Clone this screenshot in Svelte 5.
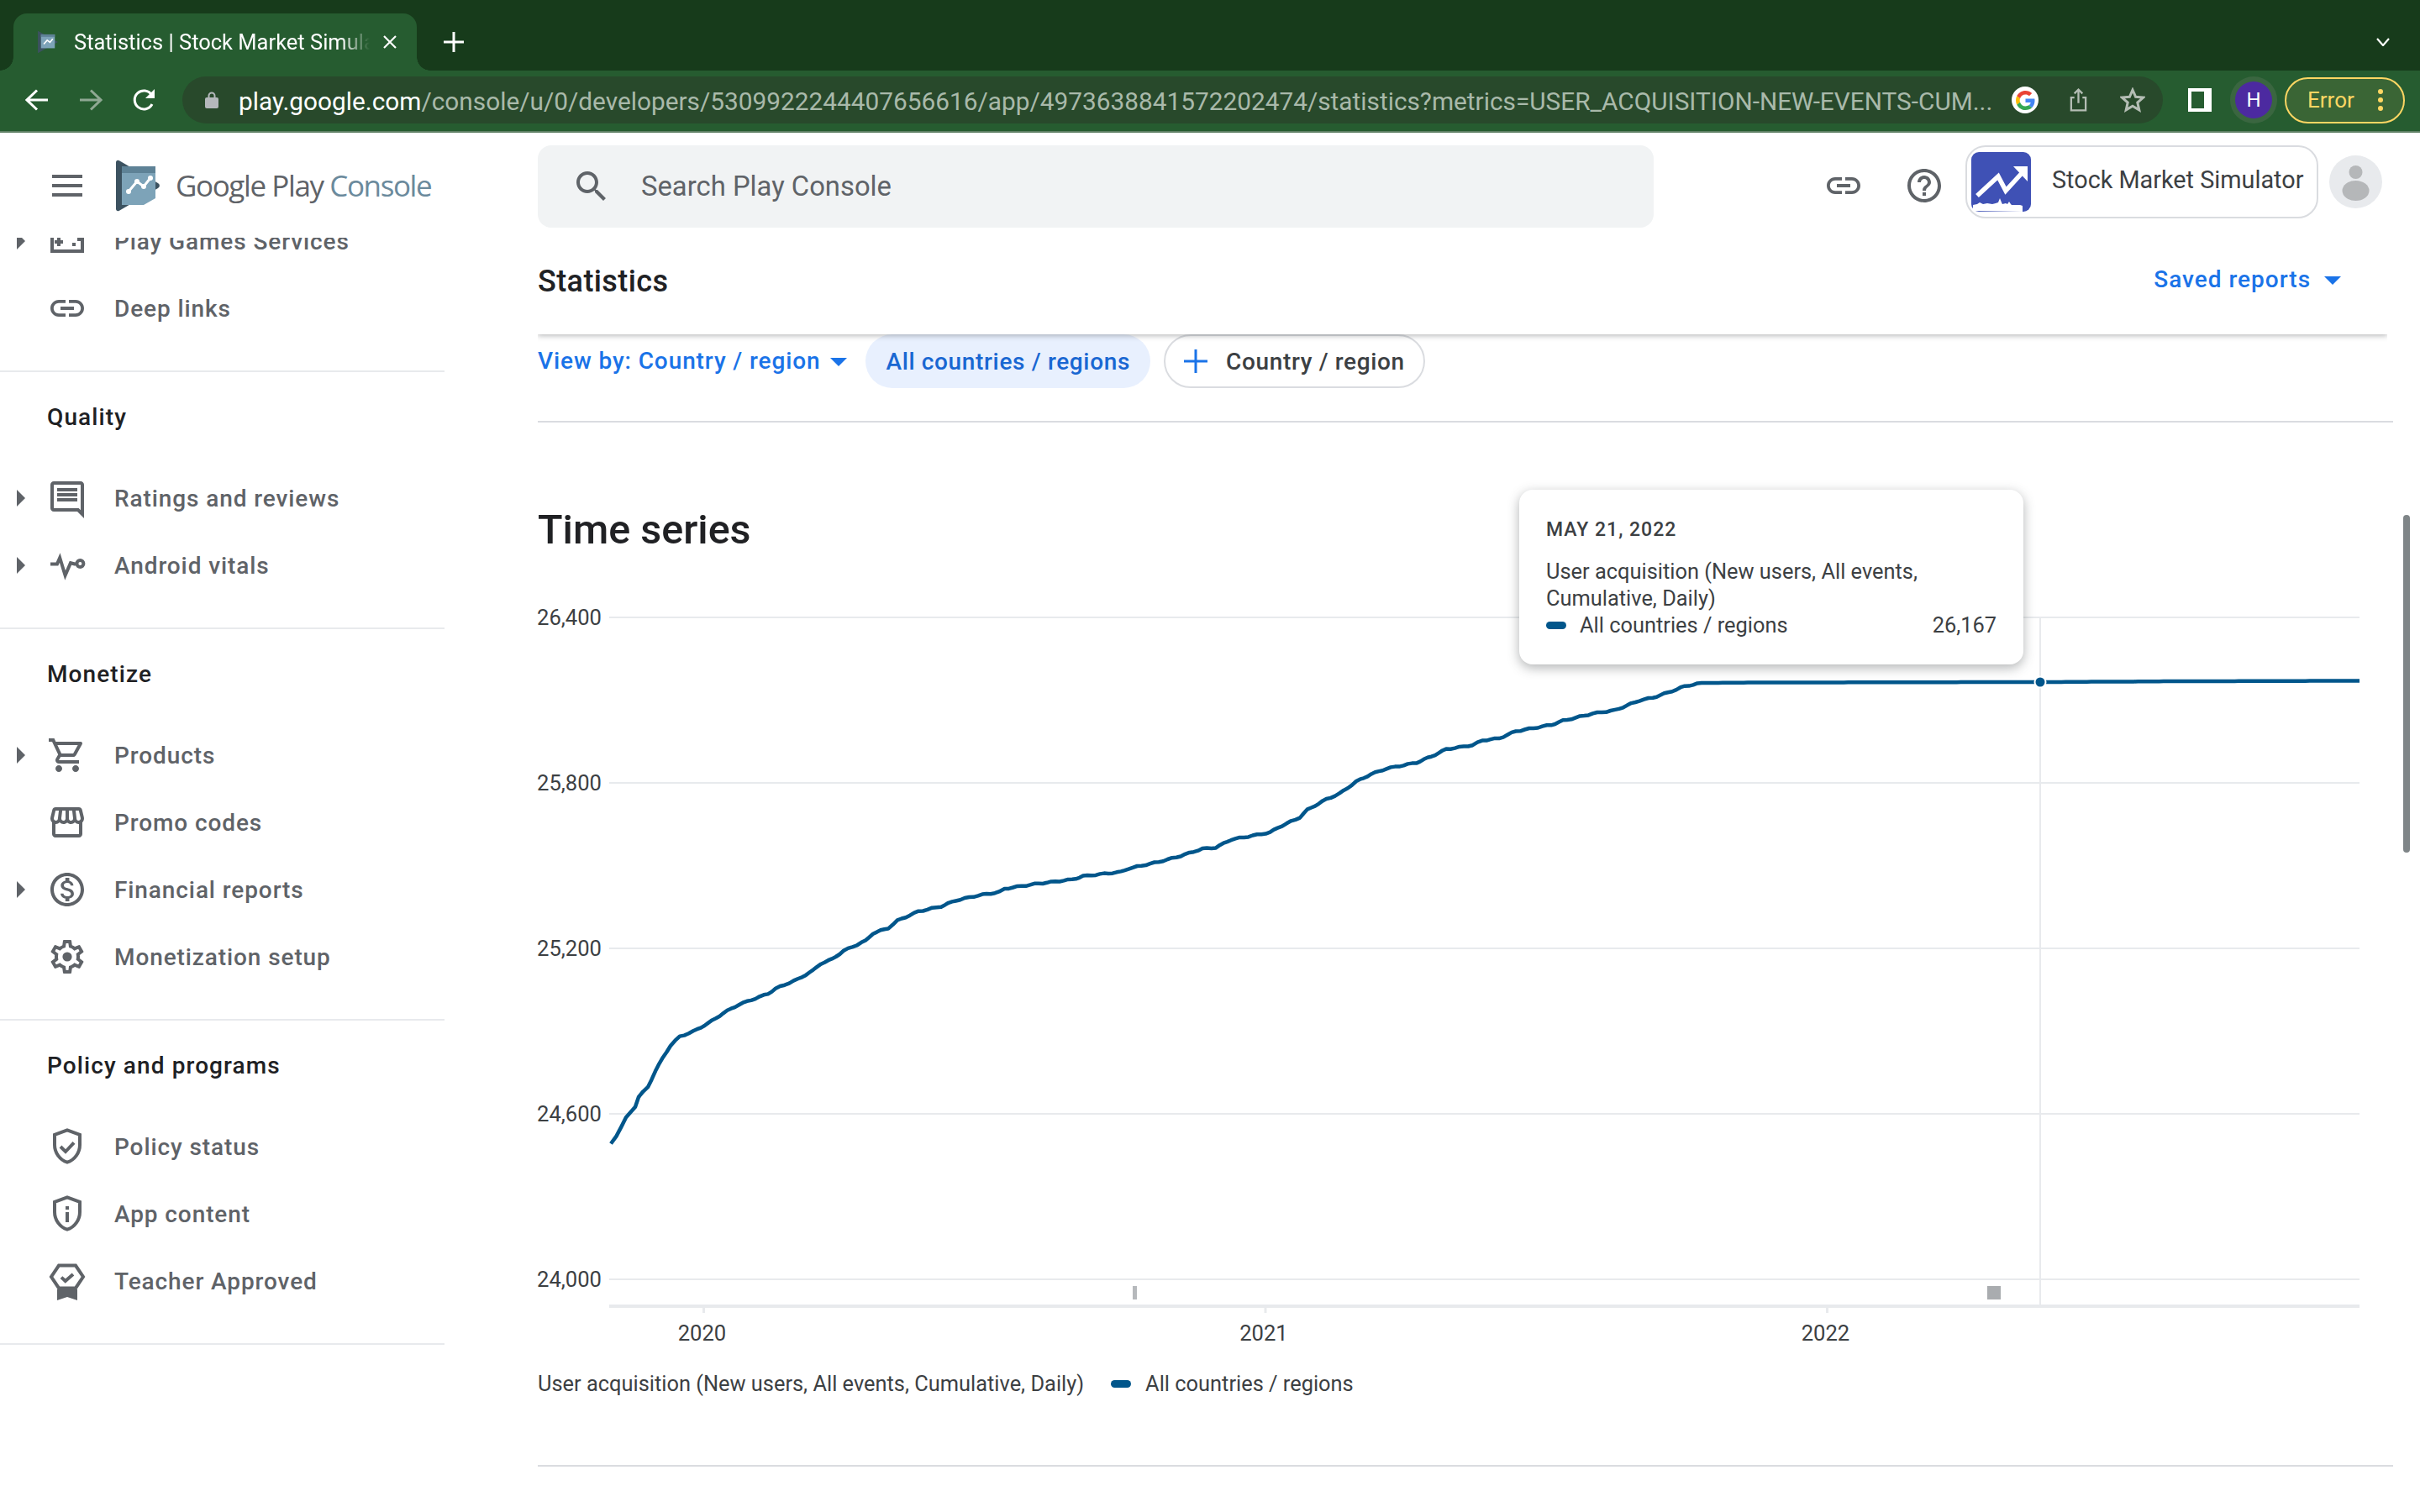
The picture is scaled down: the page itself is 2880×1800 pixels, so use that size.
<script>
  // sidebar icons, 24 unit grid drawn at 48px
  const icons = {
    games: { s: 'M3 7h18v11H3zM7 10v5M4.5 12.5h5', d: 'M15 13h2v2h-2zM18 10h2v2h-2z' },
    link: { d: 'M3.9 12c0-1.71 1.39-3.1 3.1-3.1h4V7H7c-2.76 0-5 2.24-5 5s2.24 5 5 5h4v-1.9H7c-1.71 0-3.1-1.39-3.1-3.1zM8 13h8v-2H8v2zm9-6h-4v1.9h4c1.71 0 3.1 1.39 3.1 3.1s-1.39 3.1-3.1 3.1h-4V17h4c2.76 0 5-2.24 5-5s-2.24-5-5-5z' },
    reviews: { d: 'M20 2H4c-1.1 0-2 .9-2 2v14c0 1.1.9 2 2 2h14l4 4V4c0-1.1-.9-2-2-2zm0 17.17L18.83 18H4V4h16v15.17zM6 12h12v2H6zm0-3h12v2H6zm0-3h12v2H6z' },
    vitals: { s: 'M2 11.2h4L7.6 7.5l3.2 10.5L14 10.6l3 .8M21.7 11a2 2 0 1 1-4 0 2 2 0 0 1 4 0z' },
    cart: { d: 'M15.55 13c.75 0 1.41-.41 1.75-1.03l3.58-6.49c.37-.66-.11-1.48-.87-1.48H5.21l-.94-2H1v2h2l3.6 7.59-1.35 2.44C4.52 15.37 5.48 17 7 17h12v-2H7l1.1-2h7.45zM6.16 6h12.15l-2.76 5H8.53L6.16 6zM7 18c-1.1 0-1.99.9-1.99 2S5.9 22 7 22s2-.9 2-2-.9-2-2-2zm10 0c-1.1 0-1.99.9-1.99 2s.89 2 1.99 2 2-.9 2-2-.9-2-2-2z' },
    store: { d: 'M21.9 8.89l-1.05-4.37c-.22-.9-1-1.52-1.91-1.52H5.05c-.9 0-1.69.63-1.9 1.52L2.1 8.89c-.24 1.02-.02 2.06.62 2.88.08.11.19.19.28.29V19c0 1.1.9 2 2 2h14c1.1 0 2-.9 2-2v-6.94c.09-.09.2-.18.28-.28.64-.82.87-1.87.62-2.89zm-2.99-3.9l1.05 4.37c.1.42.01.84-.25 1.17-.14.18-.44.47-.94.47-.61 0-1.14-.49-1.21-1.14L16.98 5l1.93-.01zM13 5h1.96l.54 4.52c.05.39-.07.78-.33 1.07-.22.26-.54.41-.95.41-.67 0-1.22-.59-1.22-1.31V5zM8.49 9.52L9.04 5H11v4.69c0 .72-.55 1.31-1.29 1.31-.34 0-.65-.15-.89-.41-.25-.29-.37-.68-.33-1.07zm-4.45-.16L5.05 5h1.97l-.58 4.86c-.08.65-.6 1.14-1.21 1.14-.49 0-.8-.29-.93-.47-.27-.32-.36-.75-.26-1.17zM5 19v-6.03c.08.01.15.03.23.03.87 0 1.66-.36 2.24-.95.6.6 1.4.95 2.31.95.87 0 1.65-.36 2.23-.93.59.57 1.39.93 2.29.93.84 0 1.64-.35 2.24-.95.58.59 1.37.95 2.24.95.08 0 .15-.02.23-.03V19H5z' },
    money: { d: 'M12 2C6.48 2 2 6.48 2 12s4.48 10 10 10 10-4.48 10-10S17.52 2 12 2zm0 18c-4.41 0-8-3.59-8-8s3.59-8 8-8 8 3.59 8 8-3.59 8-8 8zm.31-8.86c-1.77-.45-2.34-.94-2.34-1.67 0-.84.79-1.43 2.1-1.43 1.38 0 1.9.66 1.94 1.64h1.71c-.05-1.34-.87-2.57-2.49-2.97V5H10.9v1.69c-1.51.32-2.72 1.3-2.72 2.81 0 1.79 1.49 2.69 3.66 3.21 1.95.46 2.34 1.15 2.34 1.87 0 .53-.39 1.39-2.1 1.39-1.6 0-2.23-.72-2.32-1.64H8.04c.1 1.7 1.36 2.66 2.86 2.97V19h2.34v-1.67c1.52-.29 2.72-1.16 2.73-2.77-.01-2.2-1.9-2.96-3.66-3.42z' },
    gear: { d: 'M19.43 12.98c.04-.32.07-.64.07-.98 0-.34-.03-.66-.07-.98l2.11-1.65c.19-.15.24-.42.12-.64l-2-3.46c-.09-.16-.26-.25-.44-.25-.06 0-.12.01-.17.03l-2.49 1c-.52-.4-1.08-.73-1.69-.98l-.38-2.65C14.46 2.18 14.25 2 14 2h-4c-.25 0-.46.18-.49.42l-.38 2.65c-.61.25-1.17.59-1.69.98l-2.49-1c-.06-.02-.12-.03-.18-.03-.17 0-.34.09-.43.25l-2 3.46c-.13.22-.07.49.12.64l2.11 1.65c-.04.32-.07.65-.07.98 0 .33.03.66.07.98l-2.11 1.65c-.19.15-.24.42-.12.64l2 3.46c.09.16.26.25.44.25.06 0 .12-.01.17-.03l2.49-1c.52.4 1.08.73 1.69.98l.38 2.65c.03.24.24.42.49.42h4c.25 0 .46-.18.49-.42l.38-2.65c.61-.25 1.17-.59 1.69-.98l2.49 1c.06.02.12.03.18.03.17 0 .34-.09.43-.25l2-3.46c.12-.22.07-.49-.12-.64l-2.11-1.65zm-1.98-1.71c.04.31.05.52.05.73 0 .21-.02.43-.05.73l-.14 1.13.89.7 1.08.84-.7 1.21-1.27-.51-1.04-.42-.9.68c-.43.32-.84.56-1.25.73l-1.06.43-.16 1.13-.2 1.35h-1.4l-.19-1.35-.16-1.13-1.06-.43c-.43-.18-.83-.41-1.23-.71l-.91-.7-1.06.43-1.27.51-.7-1.21 1.08-.84.89-.7-.14-1.13c-.03-.31-.05-.54-.05-.74s.02-.43.05-.73l.14-1.13-.89-.7-1.08-.84.7-1.21 1.27.51 1.04.42.9-.68c.43-.32.84-.56 1.25-.73l1.06-.43.16-1.13.2-1.35h1.39l.19 1.35.16 1.13 1.06.43c.43.18.83.41 1.23.71l.91.7 1.06-.43 1.27-.51.7 1.21-1.07.85-.89.7.14 1.13zM12 9.2a2.8 2.8 0 1 0 0 5.6 2.8 2.8 0 0 0 0-5.6z' },
    shieldCheck: { s: 'M12 2.2 4.5 5v6c0 4.7 3.2 9.1 7.5 10.3 4.3-1.2 7.5-5.6 7.5-10.3V5zM8 12l3 3 5-5.3' },
    shieldInfo: { s: 'M12 2.2 4.5 5v6c0 4.7 3.2 9.1 7.5 10.3 4.3-1.2 7.5-5.6 7.5-10.3V5z', d: 'M11 7.5h2v2h-2zM11 11h2v6h-2z' },
    badge: { s: 'M7 2.8h10l4.5 6.7-4.5 6.7H7L2.5 9.5zM8.5 9.8l2.4 2.2 4.6-4', d: 'M6 17h12v6.5l-6-2-6 2z' }
  };

  const sections = [
    { items: [{ label: 'Play Games Services', icon: 'games', arrow: true }, { label: 'Deep links', icon: 'link' }] },
    { title: 'Quality', items: [{ label: 'Ratings and reviews', icon: 'reviews', arrow: true }, { label: 'Android vitals', icon: 'vitals', arrow: true }] },
    { title: 'Monetize', items: [
      { label: 'Products', icon: 'cart', arrow: true },
      { label: 'Promo codes', icon: 'store' },
      { label: 'Financial reports', icon: 'money', arrow: true },
      { label: 'Monetization setup', icon: 'gear' }
    ] },
    { title: 'Policy and programs', items: [
      { label: 'Policy status', icon: 'shieldCheck' },
      { label: 'App content', icon: 'shieldInfo' },
      { label: 'Teacher Approved', icon: 'badge' }
    ] }
  ];

  // chart coordinates are page pixels, the viewBox of the svg starts at the chart corner
  const trace = [
    [727,1363],[733.5,1353],[745,1332],[756,1318],[760,1307],[771,1295],[780,1276],[789,1260],[798,1245.5],[809,1235],
    [825,1229],[843,1219],[861,1207],[879,1197],[914,1184],[923,1178],[950,1166.5],[968,1156],[977,1148],[990,1143],
    [1004,1133],[1030,1121],[1039,1112],[1057,1106],[1068,1097],[1093,1086],[1120,1080],[1137.5,1073],[1164,1067],[1189,1063],
    [1195.5,1059],[1231,1053.5],[1276,1048],[1289,1044],[1334,1039],[1343,1035],[1379,1027],[1400,1021.5],[1431,1011.5],[1447,1010],
    [1465,1000.5],[1511.5,992],[1520.5,986.5],[1547,974],[1556,965],[1578.5,952.5],[1594,946],[1614,931.5],[1632,922.5],[1650,916],
    [1685.5,909],[1703.5,901.5],[1721,893],[1752.5,888],[1764,882.5],[1784,880],[1804,871.5],[1846,864],[1860,859],[1895.5,850.5],
    [1922,846.5],[1951,835],[1967,831.5],[1985,825.5],[2005,818],[2025,814],[2100,813.5],[2428,813],[2600,812],[2808,811.5]
  ];

  // the real series moves in small daily steps, so add a little wobble to the rising part
  function wobbled(points) {
    const out = [];
    for (let i = 0; i < points.length - 1; i++) {
      const [x0, y0] = points[i];
      const [x1, y1] = points[i + 1];
      const n = Math.max(1, Math.round((x1 - x0) / 5));
      for (let k = 0; k < n; k++) {
        const x = x0 + (x1 - x0) * k / n;
        const y = y0 + (y1 - y0) * k / n;
        const j = x < 2025 ? Math.sin(x * 0.31) * 0.7 : 0;
        out.push(`${x.toFixed(1)},${(y + j).toFixed(1)}`);
      }
    }
    out.push(points[points.length - 1].join(','));
    return out.join(' ');
  }

  const line = wobbled(trace);
  const grid = [
    { y: 736, label: '26,400' },
    { y: 933, label: '25,800' },
    { y: 1130, label: '25,200' },
    { y: 1327, label: '24,600' },
    { y: 1524, label: '24,000' }
  ];
  const years = [
    { x: 837.5, label: '2020' },
    { x: 1506, label: '2021' },
    { x: 2174.5, label: '2022' }
  ];
</script>

<div class="window">
  <div class="tabstrip">
    <div class="tab">
      <svg class="favicon" viewBox="6 6 62 68"><path d="M8 8 66 40 8 72z" fill="#3c5260"/><path d="M17 18h40v40H17z" fill="#7da3b8"/><path d="M17 18h40v7H17z" fill="#5e8296"/><path d="M25 46l10-11 8 6 8-10" fill="none" stroke="#fff" stroke-width="4"/></svg>
      <span class="tabtitle">Statistics | Stock Market Simulator</span>
      <svg class="tabclose" viewBox="0 0 16 16"><path d="M1 1l14 14M15 1 1 15" stroke="#fff" stroke-width="2.2"/></svg>
    </div>
    <svg class="newtab" viewBox="0 0 24 24"><path d="M12 0v24M0 12h24" stroke="#fff" stroke-width="3"/></svg>
    <svg class="tabmenu" viewBox="0 0 16 10"><path d="M1 1l7 8 7-8" fill="none" stroke="#fff" stroke-width="2.2"/></svg>
  </div>

  <div class="toolbar">
    <svg class="nav" viewBox="0 0 28 26"><path d="M27 13H3M14 1.500 2 13l12 11.500" fill="none" stroke="#fff" stroke-width="3"/></svg>
    <svg class="nav" viewBox="0 0 28 26"><path d="M1 13h24M14 1.500 26 13 14 24.500" fill="none" stroke="#8fa893" stroke-width="3"/></svg>
    <svg class="nav" viewBox="0 0 28 28"><path d="M23 19a11 11 0 1 1-.5-11" fill="none" stroke="#fff" stroke-width="3"/><path d="M26 1v11H15z" fill="#fff"/></svg>

    <div class="omnibox">
      <svg class="lock" viewBox="0 0 16 20"><path d="M4.500 8V5a3.500 3.500 0 0 1 7 0v3" fill="none" stroke="#b4b8bb" stroke-width="2"/><rect y="7" width="16" height="13" rx="2" fill="#b4b8bb"/></svg>
      <span class="url"><span class="domain">play.google.com</span>/console/u/0/developers/5309922244407656616/app/4973638841572202474/statistics?metrics=USER_ACQUISITION-NEW-EVENTS-CUM...</span>
      <div class="gicon">
        <svg viewBox="0 0 48 48"><path fill="#EA4335" d="M24 9.500c3.540 0 6.710 1.220 9.210 3.600l6.850-6.850C35.900 2.380 30.470 0 24 0 14.620 0 6.510 5.380 2.560 13.220l7.980 6.190C12.430 13.720 17.740 9.500 24 9.500z"/><path fill="#4285F4" d="M46.980 24.550c0-1.570-.15-3.090-.38-4.550H24v9.020h12.940c-.58 2.960-2.260 5.480-4.780 7.180l7.730 6c4.510-4.180 7.090-10.360 7.090-17.650z"/><path fill="#FBBC05" d="M10.530 28.590c-.48-1.450-.76-2.990-.76-4.590s.27-3.140.76-4.590l-7.980-6.190C.92 16.460 0 20.120 0 24c0 3.880.92 7.540 2.560 10.780l7.970-6.190z"/><path fill="#34A853" d="M24 48c6.480 0 11.930-2.130 15.890-5.810l-7.730-6c-2.150 1.450-4.920 2.300-8.160 2.300-6.260 0-11.570-4.220-13.470-9.910l-7.980 6.190C6.510 42.620 14.620 48 24 48z"/></svg>
      </div>
      <svg class="share" viewBox="0 0 24 30"><path d="M7 12H3v16h18V12h-4M12 19V2M7 7l5-5 5 5" fill="none" stroke="#b4bdb4" stroke-width="2.400"/></svg>
      <svg class="star" viewBox="0 0 30 30"><path d="M15 3l3.600 8.300 9 .8-6.800 6 2 8.800L15 22.300 7.200 26.900l2-8.800-6.800-6 9-.8z" fill="none" stroke="#b4bdb4" stroke-width="3"/></svg>
    </div>

    <div class="sidepanel"></div>
    <div class="profile"><span>H</span></div>
    <div class="errorpill">
      <span>Error</span>
      <svg viewBox="0 0 6 26"><circle cx="3" cy="3" r="3"/><circle cx="3" cy="13" r="3"/><circle cx="3" cy="23" r="3"/></svg>
    </div>
  </div>

  <div class="app">
    <header class="topbar">
      <div class="brand">
        <div class="burger"><i></i><i></i><i></i></div>
        <svg class="logo" viewBox="0 0 56 62">
          <path d="M2 3.500C2 1 4 0 6 1.200L52 28c2.500 1.500 2.500 4.500 0 6L6 60.800C4 62 2 61 2 58.500z" fill="#3c5260"/>
          <path d="M9 8h40v38l-14 8H9z" fill="#7da3b8"/>
          <path d="M9 8h40v8H9z" fill="#5e8296"/>
          <path d="M17 38l10-12 8 6 8-10" fill="none" stroke="#fff" stroke-width="3"/>
          <circle cx="17" cy="38" r="3" fill="#fff"/><circle cx="27" cy="26" r="3" fill="#fff"/><circle cx="35" cy="32" r="3" fill="#fff"/><circle cx="43" cy="22" r="3" fill="#fff"/>
        </svg>
        <span class="wordmark">Google Play <em>Console</em></span>
      </div>
      <div class="search">
        <svg viewBox="0 0 24 24"><path fill="#5f6368" d="M15.500 14h-.79l-.28-.27C15.410 12.590 16 11.110 16 9.500 16 5.910 13.090 3 9.500 3S3 5.910 3 9.500 5.910 16 9.500 16c1.610 0 3.090-.59 4.230-1.570l.27.28v.79l5 4.990L20.490 19l-4.990-5zm-6 0C7.010 14 5 11.990 5 9.500S7.010 5 9.500 5 14 7.010 14 9.500 11.990 14 9.500 14z"/></svg>
        <span>Search Play Console</span>
      </div>
      <svg class="topicon linkicon" viewBox="0 0 24 24"><path fill="#5f6368" d={icons.link.d}/></svg>
      <svg class="topicon helpicon" viewBox="0 0 24 24"><path fill="#5f6368" d="M11 18h2v-2h-2v2zm1-16C6.480 2 2 6.480 2 12s4.480 10 10 10 10-4.480 10-10S17.520 2 12 2zm0 18c-4.410 0-8-3.590-8-8s3.590-8 8-8 8 3.590 8 8-3.590 8-8 8zm0-14c-2.210 0-4 1.790-4 4h2c0-1.100.9-2 2-2s2 .9 2 2c0 2-3 1.750-3 5h2c0-2.250 3-2.500 3-5 0-2.210-1.790-4-4-4z"/></svg>
      <div class="appchip">
        <svg class="appicon" viewBox="0 0 71 71">
          <rect width="71" height="71" rx="9" fill="#3f51b5"/>
          <path d="M7 52 32 29l9 17 22-24" fill="none" stroke="#fff" stroke-width="5.500"/>
          <path d="M50 17h17v18z" fill="#fff"/>
          <path d="M2 70v-7l5-1 3-2 4 2 5-1 6 1 4-1 3-1 2-5 2 5 1 2 4-1 2 1 2-3 2 3 1 1h10l3 1v7z" fill="#fff"/>
        </svg>
        <span>Stock Market Simulator</span>
      </div>
      <div class="avatar">
        <svg viewBox="0 0 63 63"><circle cx="31.500" cy="20" r="8" fill="#b5b7b9"/><ellipse cx="31.500" cy="42" rx="16" ry="12" fill="#b5b7b9"/></svg>
      </div>
    </header>

    <aside class="sidebar">
      <div class="navscroll">
        {#each sections as section}
          <section class="navgroup">
            {#if section.title}
              <h3>{section.title}</h3>
            {/if}
            {#each section.items as item}
              <div class="navrow">
                <span class="caret">
                  {#if item.arrow}
                    <svg viewBox="0 0 10 20"><path d="M0 0l10 10-10 10z" fill="#5f6368"/></svg>
                  {/if}
                </span>
                <svg class="navicon" viewBox="0 0 24 24">
                  {#if icons[item.icon].s}
                    <path d={icons[item.icon].s} fill="none" stroke="#5f6368" stroke-width="2"/>
                  {/if}
                  {#if icons[item.icon].d}
                    <path d={icons[item.icon].d} fill="#5f6368" fill-rule="evenodd"/>
                  {/if}
                </svg>
                <span class="navlabel">{item.label}</span>
              </div>
            {/each}
          </section>
        {/each}
      </div>
    </aside>

    <main class="content">
      <div class="pagehead">
        <h1>Statistics</h1>
        <div class="saved">Saved reports <svg viewBox="0 0 20 10"><path d="M0 0h20L10 10z" fill="#1a73e8"/></svg></div>
      </div>

      <div class="filters">
        <div class="viewby">View by: Country / region <svg viewBox="0 0 20 10"><path d="M0 0h20L10 10z" fill="#1a73e8"/></svg></div>
        <div class="chip active">All countries / regions</div>
        <div class="chip">
          <svg viewBox="0 0 28 28"><path d="M14 0v28M0 14h28" stroke="#1a73e8" stroke-width="3"/></svg>
          Country / region
        </div>
      </div>

      <h2>Time series</h2>

      <div class="chart">
        <svg class="plot" viewBox="640 700 2208 900">
          {#each grid as g}
            <line x1="725" x2="2808" y1={g.y} y2={g.y} stroke="#e8eaed" stroke-width="2"/>
            <text class="axis" x="716" y={g.y + 9} text-anchor="end">{g.label}</text>
          {/each}
          <line x1="725" x2="2808" y1="1556" y2="1556" stroke="#e8eaed" stroke-width="4"/>
          {#each years as t}
            <line x1={t.x} x2={t.x} y1="1558" y2="1564" stroke="#e8eaed" stroke-width="3"/>
            <text class="axis" x={t.x - 2} y="1597" text-anchor="middle">{t.label}</text>
          {/each}
          <line x1="2428" x2="2428" y1="736" y2="1554" stroke="#e8eaed" stroke-width="2"/>
          <rect x="1348" y="1532" width="5" height="16" fill="#b6b9bc"/>
          <rect x="2365" y="1532" width="16" height="16" fill="#a9acaf"/>
          <polyline points={line} fill="none" stroke="#01568b" stroke-width="4.500" stroke-linejoin="round"/>
          <circle cx="2428" cy="813" r="6.500" fill="#01568b" stroke="#fff" stroke-width="2"/>
        </svg>

        <div class="tooltip">
          <div class="tipdate">MAY 21, 2022</div>
          <div class="tipmetric">User acquisition (New users, All events, Cumulative, Daily)</div>
          <div class="tiprow">
            <i class="swatch"></i>
            <span class="tipname">All countries / regions</span>
            <span>26,167</span>
          </div>
        </div>
      </div>

      <div class="legend">
        <span>User acquisition (New users, All events, Cumulative, Daily)</span>
        <i class="swatch"></i>
        <span>All countries / regions</span>
      </div>
      <div class="endrule"></div>
    </main>

    <div class="scrollthumb"></div>
  </div>
</div>

<style>
  :global(body) {
    margin: 0;
    background: #fff;
    overflow: hidden;
  }

  .window {
    width: 2880px;
    height: 1800px;
    display: flex;
    flex-direction: column;
    overflow: hidden;
    font-family: Roboto, 'Liberation Sans', sans-serif;
  }

  /* browser chrome */
  .tabstrip {
    height: 84px;
    flex: none;
    box-sizing: border-box;
    background: #173b1b;
    display: flex;
    align-items: flex-end;
    padding-left: 16px;
    padding-right: 36px;
  }

  .tab {
    position: relative;
    width: 480px;
    height: 68px;
    box-sizing: border-box;
    background: #265c30;
    border-radius: 16px 16px 0 0;
    display: flex;
    align-items: center;
    padding: 0 24px 0 28px;
    color: #fff;
    font-size: 25.500px;
  }

  .tab::before,
  .tab::after {
    content: '';
    position: absolute;
    bottom: 0;
    width: 16px;
    height: 16px;
  }

  .tab::before {
    left: -16px;
    background: radial-gradient(circle at 0 0, transparent 15.500px, #265c30 16px);
  }

  .tab::after {
    right: -16px;
    background: radial-gradient(circle at 100% 0, transparent 15.500px, #265c30 16px);
  }

  .favicon {
    width: 26px;
    height: 28px;
    flex: none;
    margin-right: 18px;
  }

  .tabtitle {
    flex: 1;
    white-space: nowrap;
    overflow: hidden;
    mask-image: linear-gradient(to right, #000 90%, transparent);
  }

  .tabclose {
    width: 16px;
    height: 16px;
    flex: none;
    margin-left: 16px;
  }

  .newtab {
    width: 24px;
    height: 24px;
    margin: 0 0 22px 32px;
  }

  .tabmenu {
    width: 16px;
    height: 10px;
    margin: 0 0 29px auto;
  }

  .toolbar {
    height: 74px;
    flex: none;
    box-sizing: border-box;
    background: #265c30;
    border-bottom: 2px solid #5f8065;
    display: flex;
    align-items: center;
    padding: 0 18px 2px 30px;
  }

  .nav {
    width: 28px;
    height: 28px;
    flex: none;
    margin-right: 36px;
  }

  .omnibox {
    width: 2357px;
    height: 56px;
    flex: none;
    margin-left: -5px;
    border-radius: 28px;
    background: #28492b;
    display: flex;
    align-items: center;
    box-sizing: border-box;
    padding-left: 27px;
  }

  .lock {
    width: 16px;
    height: 20px;
    flex: none;
  }

  .url {
    width: 2086px;
    flex: none;
    margin-left: 24px;
    margin-top: 2px;
    white-space: nowrap;
    overflow: hidden;
    color: #a9b9aa;
    font-size: 29.800px;
  }

  .domain {
    color: #fff;
  }

  .gicon {
    width: 32px;
    height: 32px;
    flex: none;
    margin-left: 24px;
    border-radius: 50%;
    background: #fff;
    display: grid;
    place-items: center;
  }

  .gicon svg {
    width: 23px;
    height: 23px;
  }

  .share {
    width: 23px;
    height: 30px;
    margin-left: 36px;
    flex: none;
  }

  .star {
    width: 30px;
    height: 30px;
    margin-left: 38px;
    flex: none;
  }

  .sidepanel {
    width: 28px;
    height: 28px;
    flex: none;
    margin-left: 30px;
    box-sizing: border-box;
    border: 4px solid #fff;
    border-right-width: 9px;
  }

  .profile {
    width: 56px;
    height: 56px;
    flex: none;
    margin-left: 22px;
    border-radius: 50%;
    background: #3a6640;
    display: grid;
    place-items: center;
  }

  .profile span {
    width: 44px;
    height: 44px;
    border-radius: 50%;
    background: #4c2aa0;
    color: #fff;
    font-size: 24px;
    line-height: 44px;
    text-align: center;
  }

  .errorpill {
    width: 143px;
    height: 55px;
    flex: none;
    margin-left: 9px;
    box-sizing: border-box;
    border: 2px solid #fdd663;
    border-radius: 28px;
    background: #3a6535;
    color: #fdd663;
    font-size: 26px;
    display: flex;
    align-items: center;
    justify-content: space-between;
    padding: 0 24px 0 25px;
  }

  .errorpill svg {
    width: 6px;
    height: 26px;
    fill: #fdd663;
  }

  /* console shell */
  .app {
    position: relative;
    flex: 1;
    min-height: 0;
    display: grid;
    grid-template-columns: 529px 1fr;
    grid-template-rows: 125px 1fr;
  }

  .topbar {
    grid-column: 1 / 3;
    display: flex;
    align-items: flex-start;
    background: #fff;
  }

  .brand {
    width: 640px;
    height: 125px;
    flex: none;
    display: flex;
    align-items: center;
    box-sizing: border-box;
    padding-left: 62px;
  }

  .burger {
    width: 36px;
    display: flex;
    flex-direction: column;
    gap: 7px;
    margin-right: 40px;
  }

  .burger i {
    height: 4px;
    background: #5f6368;
  }

  .logo {
    width: 56px;
    height: 62px;
    flex: none;
    margin-left: -2px;
  }

  .wordmark {
    margin-left: 17px;
    font-family: 'Open Sans', sans-serif;
    font-size: 35px;
    letter-spacing: -1.400px;
    color: #5f6368;
  }

  .wordmark em {
    font-style: normal;
    color: #6b8a9c;
  }

  .search {
    width: 1328px;
    height: 98px;
    flex: none;
    margin-top: 15px;
    box-sizing: border-box;
    border-radius: 16px;
    background: #f1f3f4;
    display: flex;
    align-items: center;
    padding-left: 40px;
    color: #5f6368;
    font-size: 32.800px;
    font-family: Roboto, sans-serif;
  }

  .search svg {
    width: 48px;
    height: 48px;
    margin-right: 35px;
  }

  .topicon {
    width: 48px;
    height: 48px;
    flex: none;
    margin-top: 39px;
  }

  .linkicon {
    margin-left: 202px;
  }

  .helpicon {
    margin-left: 48px;
  }

  .appchip {
    width: 420px;
    height: 87px;
    flex: none;
    margin: 15px 0 0 25px;
    box-sizing: border-box;
    border: 2px solid #dadce0;
    border-radius: 24px;
    display: flex;
    align-items: flex-start;
    padding: 6px 0 0 5px;
    color: #3c4043;
    font-size: 28.800px;
  }

  .appicon {
    width: 71px;
    height: 71px;
    flex: none;
    margin-right: 25px;
  }

  .appchip span {
    margin-top: 16px;
    white-space: nowrap;
  }

  .avatar {
    width: 63px;
    height: 63px;
    flex: none;
    margin: 27px 0 0 13px;
    border-radius: 50%;
    background: #e8eaed;
  }

  .avatar svg {
    display: block;
    width: 63px;
    height: 63px;
  }

  /* sidebar */
  .sidebar {
    overflow: hidden;
    min-height: 0;
  }

  .navscroll {
    margin-top: -36px;
  }

  .navgroup {
    padding-bottom: 34px;
    border-bottom: 2px solid #e8eaed;
  }

  .navgroup h3 {
    margin: 0 0 26px;
    padding-top: 24px;
    padding-left: 56px;
    height: 60px;
    line-height: 60px;
    font-size: 28px;
    font-weight: 500;
    letter-spacing: 1.100px;
    color: #202124;
  }

  .navrow {
    height: 80px;
    display: flex;
    align-items: center;
    padding-left: 20px;
  }

  .caret {
    width: 36px;
    flex: none;
    display: flex;
  }

  .caret svg {
    width: 10px;
    height: 20px;
  }

  .navicon {
    width: 48px;
    height: 48px;
    flex: none;
  }

  .navlabel {
    margin-left: 32px;
    font-size: 28px;
    font-weight: 500;
    letter-spacing: 0.900px;
    color: #5f6368;
    white-space: nowrap;
  }

  /* main column */
  .content {
    min-width: 0;
    min-height: 0;
    overflow: hidden;
    padding: 0 32px 0 111px;
  }

  .pagehead {
    position: relative;
    z-index: 1;
    height: 115px;
    margin-right: 7px;
    box-sizing: border-box;
    background: #fff;
    box-shadow: 0 2px 6px rgba(60, 64, 67, 0.35);
    display: flex;
    justify-content: space-between;
    padding: 30px 55px 0 0;
    clip-path: inset(0 0 -24px 0);
  }

  .pagehead h1 {
    margin: 0;
    font-size: 36px;
    line-height: 44px;
    font-weight: 500;
    letter-spacing: 0.400px;
    color: #202124;
  }

  .saved {
    margin-top: -2px;
    color: #1a73e8;
    font-size: 28px;
    font-weight: 500;
    line-height: 44px;
    letter-spacing: 1px;
    white-space: nowrap;
  }

  .saved svg {
    width: 20px;
    height: 10px;
    margin-left: 8px;
    vertical-align: 3px;
  }

  .filters {
    height: 105px;
    box-sizing: border-box;
    border-bottom: 2px solid #dadce0;
    display: flex;
    align-items: flex-start;
    gap: 16px;
    font-size: 28px;
    font-weight: 500;
    letter-spacing: 0.650px;
  }

  .viewby {
    color: #1a73e8;
    line-height: 64px;
    letter-spacing: 0.900px;
    white-space: nowrap;
    margin-right: 6px;
  }

  .viewby svg {
    width: 20px;
    height: 10px;
    margin-left: 4px;
    vertical-align: 3px;
  }

  .chip {
    height: 64px;
    box-sizing: border-box;
    border: 2px solid #dadce0;
    border-radius: 32px;
    display: flex;
    align-items: center;
    gap: 22px;
    padding: 0 22px;
    color: #3c4043;
    white-space: nowrap;
  }

  .chip.active {
    border: 0;
    background: #e8f0fe;
    color: #1967d2;
    padding: 0 24px;
  }

  .chip svg {
    width: 28px;
    height: 28px;
  }

  h2 {
    margin: 93px 0 0;
    height: 70px;
    line-height: 70px;
    font-size: 48.500px;
    font-weight: 500;
    color: #202124;
  }

  .chart {
    position: relative;
    margin-top: 33px;
    height: 900px;
  }

  .plot {
    display: block;
    width: 2208px;
    height: 900px;
    overflow: visible;
  }

  .axis {
    font-family: Roboto, sans-serif;
    font-size: 25.600px;
    fill: #3c4043;
  }

  .tooltip {
    position: absolute;
    left: 1168px;
    top: -116px;
    width: 600px;
    height: 208px;
    box-sizing: border-box;
    padding: 32px 32px 0;
    background: #fff;
    border-radius: 16px;
    box-shadow: 0 4px 14px rgba(60, 64, 67, 0.4);
    color: #3c4043;
    font-size: 25.400px;
    line-height: 32px;
  }

  .tipdate {
    font-size: 23px;
    font-weight: 500;
    letter-spacing: 1px;
    margin-bottom: 17px;
  }

  .tipmetric {
    width: 500px;
  }

  .tiprow {
    display: flex;
    align-items: center;
    gap: 16px;
  }

  .tipname {
    flex: 1;
  }

  .swatch {
    width: 24px;
    height: 9px;
    flex: none;
    border-radius: 5px;
    background: #01568b;
  }

  .legend {
    display: flex;
    align-items: center;
    height: 40px;
    margin-top: 28px;
    color: #3c4043;
    font-size: 25.400px;
  }

  .legend .swatch {
    margin: 0 17px 0 32px;
  }

  .endrule {
    height: 2px;
    margin-top: 77px;
    background: #dadce0;
  }

  .scrollthumb {
    position: absolute;
    left: 2860px;
    top: 455px;
    width: 8px;
    height: 402px;
    border-radius: 4px;
    background: #7f8588;
  }
</style>
